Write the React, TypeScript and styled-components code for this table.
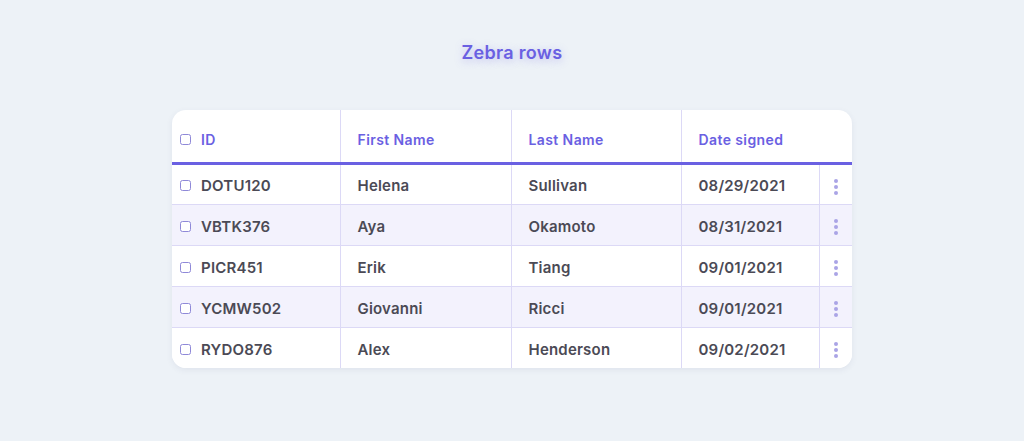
import styled, { createGlobalStyle } from "styled-components";

const GlobalStyle = createGlobalStyle`
	html, body {
		margin: 0;
		padding: 0;
		background: #edf2f7;
		font-family: "Inter", "Liberation Sans", sans-serif;
	}
`;

const Page = styled.div`
	width: 1024px;
	height: 441px;
	display: flex;
	flex-direction: column;
	align-items: center;
	padding-top: 41px;
	box-sizing: border-box;
`;

const Title = styled.h1`
	margin: 0 0 46px;
	font-size: 18px;
	line-height: 23px;
	font-weight: 600;
	letter-spacing: 0.3px;
	color: #6a60e2;
	text-shadow: 0 2px 8px rgba(106, 96, 226, 0.35);
`;

const Card = styled.div`
	width: 680px;
	background: #ffffff;
	border-radius: 14px;
	overflow: hidden;
	box-shadow: 0 2px 6px rgba(60, 70, 110, 0.08);
`;

const Table = styled.table`
	width: 100%;
	border-collapse: collapse;
	table-layout: fixed;
`;

const HeadCell = styled.th`
	height: 53px;
	padding: 8px 0 0 17px;
	box-sizing: border-box;
	text-align: left;
	font-size: 14px;
	font-weight: 600;
	letter-spacing: 0.4px;
	color: #6a60e2;
	border-bottom: 3px solid #6a60e2;
	border-left: 1px solid #dcd9f6;
	&:first-child {
		border-left: none;
		padding-left: 8px;
	}
`;

const Row = styled.tr<{ $zebra: boolean }>`
	background: ${(p) => (p.$zebra ? "#f3f2fd" : "#ffffff")};
	td {
		border-bottom: 1px solid #dcd9f6;
	}
	&:last-child td {
		border-bottom: none;
	}
`;

const Cell = styled.td`
	height: 41px;
	padding: 3px 0 0 17px;
	box-sizing: border-box;
	font-size: 15px;
	font-weight: 600;
	letter-spacing: 0.2px;
	color: #4b4a55;
	border-left: 1px solid #dcd9f6;
	&:first-child {
		border-left: none;
		padding-left: 8px;
	}
`;

const MenuCell = styled.td`
	height: 41px;
	padding: 2px 0 0;
	box-sizing: border-box;
	border-left: 1px solid #dcd9f6;
	text-align: center;
	vertical-align: middle;
`;

const IdWrap = styled.div`
	display: flex;
	align-items: center;
	gap: 10px;
`;

const Check = styled.span`
	width: 9px;
	height: 9px;
	border: 1.5px solid #8f89d8;
	border-radius: 2.5px;
	background: #ffffff;
	flex: none;
`;

const Dots = styled.div`
	display: inline-flex;
	flex-direction: column;
	gap: 2px;
	vertical-align: middle;
	span {
		width: 4px;
		height: 4px;
		border-radius: 50%;
		background: #aaa4e6;
	}
`;

const rows = [
	{ id: "DOTU120", first: "Helena", last: "Sullivan", date: "08/29/2021" },
	{ id: "VBTK376", first: "Aya", last: "Okamoto", date: "08/31/2021" },
	{ id: "PICR451", first: "Erik", last: "Tiang", date: "09/01/2021" },
	{ id: "YCMW502", first: "Giovanni", last: "Ricci", date: "09/01/2021" },
	{ id: "RYDO876", first: "Alex", last: "Henderson", date: "09/02/2021" },
];

export default function App() {
	return (
		<>
			<GlobalStyle />
			<Page>
				<Title>Zebra rows</Title>
				<Card>
					<Table>
						<colgroup>
							<col style={{ width: 168 }} />
							<col style={{ width: 171 }} />
							<col style={{ width: 170 }} />
							<col style={{ width: 138 }} />
							<col />
						</colgroup>
						<thead>
							<tr>
								<HeadCell>
									<IdWrap>
										<Check />
										ID
									</IdWrap>
								</HeadCell>
								<HeadCell>First Name</HeadCell>
								<HeadCell>Last Name</HeadCell>
								<HeadCell colSpan={2}>Date signed</HeadCell>
							</tr>
						</thead>
						<tbody>
							{rows.map((r, i) => (
								<Row key={r.id} $zebra={i % 2 === 1}>
									<Cell>
										<IdWrap>
											<Check />
											{r.id}
										</IdWrap>
									</Cell>
									<Cell>{r.first}</Cell>
									<Cell>{r.last}</Cell>
									<Cell>{r.date}</Cell>
									<MenuCell>
										<Dots>
											<span />
											<span />
											<span />
										</Dots>
									</MenuCell>
								</Row>
							))}
						</tbody>
					</Table>
				</Card>
			</Page>
		</>
	);
}
